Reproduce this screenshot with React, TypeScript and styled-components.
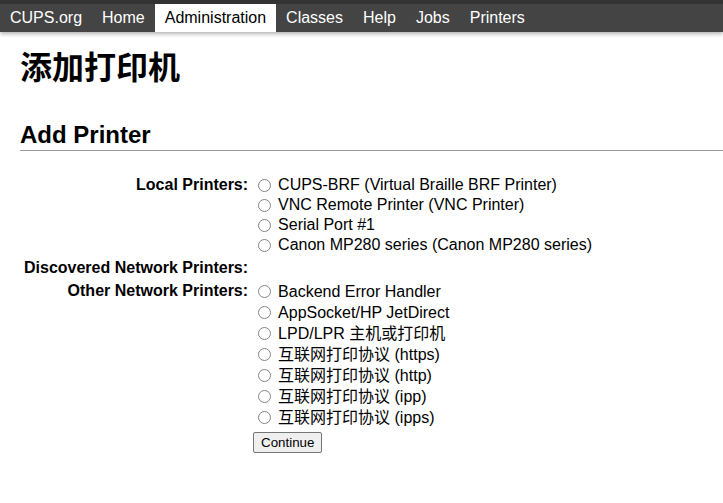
import React, { ReactElement } from "react";
import styled, { createGlobalStyle } from "styled-components";

const navItems = ["CUPS.org", "Home", "Administration", "Classes", "Help", "Jobs", "Printers"];

const localPrinters = [
  "CUPS-BRF (Virtual Braille BRF Printer)",
  "VNC Remote Printer (VNC Printer)",
  "Serial Port #1",
  "Canon MP280 series (Canon MP280 series)",
];

const networkPrinters = [
  "Backend Error Handler",
  "AppSocket/HP JetDirect",
  "LPD/LPR 主机或打印机",
  "互联网打印协议 (https)",
  "互联网打印协议 (http)",
  "互联网打印协议 (ipp)",
  "互联网打印协议 (ipps)",
];

export default function App(): ReactElement {
  return (
    <>
      <GlobalStyle />
      <Nav>
        {navItems.map((item) => (
          <NavLink key={item} $active={item === "Administration"}>
            {item}
          </NavLink>
        ))}
      </Nav>
      <Main>
        <Title>添加打印机</Title>
        <Section>Add Printer</Section>
        <Form>
          <Label>Local Printers:</Label>
          <Options>
            {localPrinters.map((p) => (
              <Option key={p} $tall={false}>
                <Radio type="radio" name="device" />
                {p}
              </Option>
            ))}
          </Options>
          <Label>Discovered Network Printers:</Label>
          <Options />
          <Label>Other Network Printers:</Label>
          <Options>
            {networkPrinters.map((p) => (
              <Option key={p} $tall>
                <Radio type="radio" name="device" />
                {p}
              </Option>
            ))}
            <Button type="button">Continue</Button>
          </Options>
        </Form>
      </Main>
    </>
  );
}

const GlobalStyle = createGlobalStyle`
  body {
    margin: 0;
    background: #fff;
    color: #000;
    font-family: "Liberation Sans", Arial, "Noto Sans CJK SC", sans-serif;
    font-size: 16px;
  }
`;

const Nav = styled.nav`
  display: flex;
  background: #444;
  border-top: 4px solid #333;
  box-shadow: 0 2px 4px rgba(0, 0, 0, 0.3);
`;

const NavLink = styled.a<{ $active: boolean }>`
  padding: 5px 10px;
  line-height: 18px;
  font-size: 16px;
  color: ${(p) => (p.$active ? "#000" : "#fff")};
  background: ${(p) => (p.$active ? "#fff" : "transparent")};
  cursor: pointer;
`;

const Main = styled.main`
  padding: 0 0 40px 20px;
`;

const Title = styled.h1`
  margin: 16px 0 0;
  font-size: 32px;
  line-height: 40px;
  font-weight: bold;
`;

const Section = styled.h2`
  margin: 33px 0 0;
  padding-bottom: 1px;
  font-size: 24px;
  line-height: 28px;
  font-weight: bold;
  border-bottom: 1px solid #999;
`;

const Form = styled.div`
  display: grid;
  grid-template-columns: auto 1fr;
  column-gap: 4px;
  row-gap: 3px;
  margin-top: 24px;
`;

const Label = styled.div`
  padding: 0 1px 0 4px;
  text-align: right;
  font-weight: bold;
  line-height: 20px;
  white-space: nowrap;
`;

const Options = styled.div`
  display: flex;
  flex-direction: column;
  align-items: flex-start;
  min-height: 20px;
`;

const Option = styled.label<{ $tall: boolean }>`
  display: flex;
  align-items: center;
  height: ${(p) => (p.$tall ? "21px" : "20px")};
  line-height: ${(p) => (p.$tall ? "21px" : "20px")};
  white-space: nowrap;
`;

const Radio = styled.input`
  appearance: none;
  box-sizing: border-box;
  width: 13px;
  height: 13px;
  margin: 0 7px 0 5px;
  border: 1px solid #858585;
  border-radius: 50%;
  background: #fff;
`;

const Button = styled.button`
  margin-top: 4px;
  height: 21px;
  padding: 1px 7px;
  font-family: "Liberation Sans", Arial, sans-serif;
  font-size: 13.33px;
  color: #000;
  background: #efefef;
  border: 1px solid #767676;
  border-radius: 2px;
`;
